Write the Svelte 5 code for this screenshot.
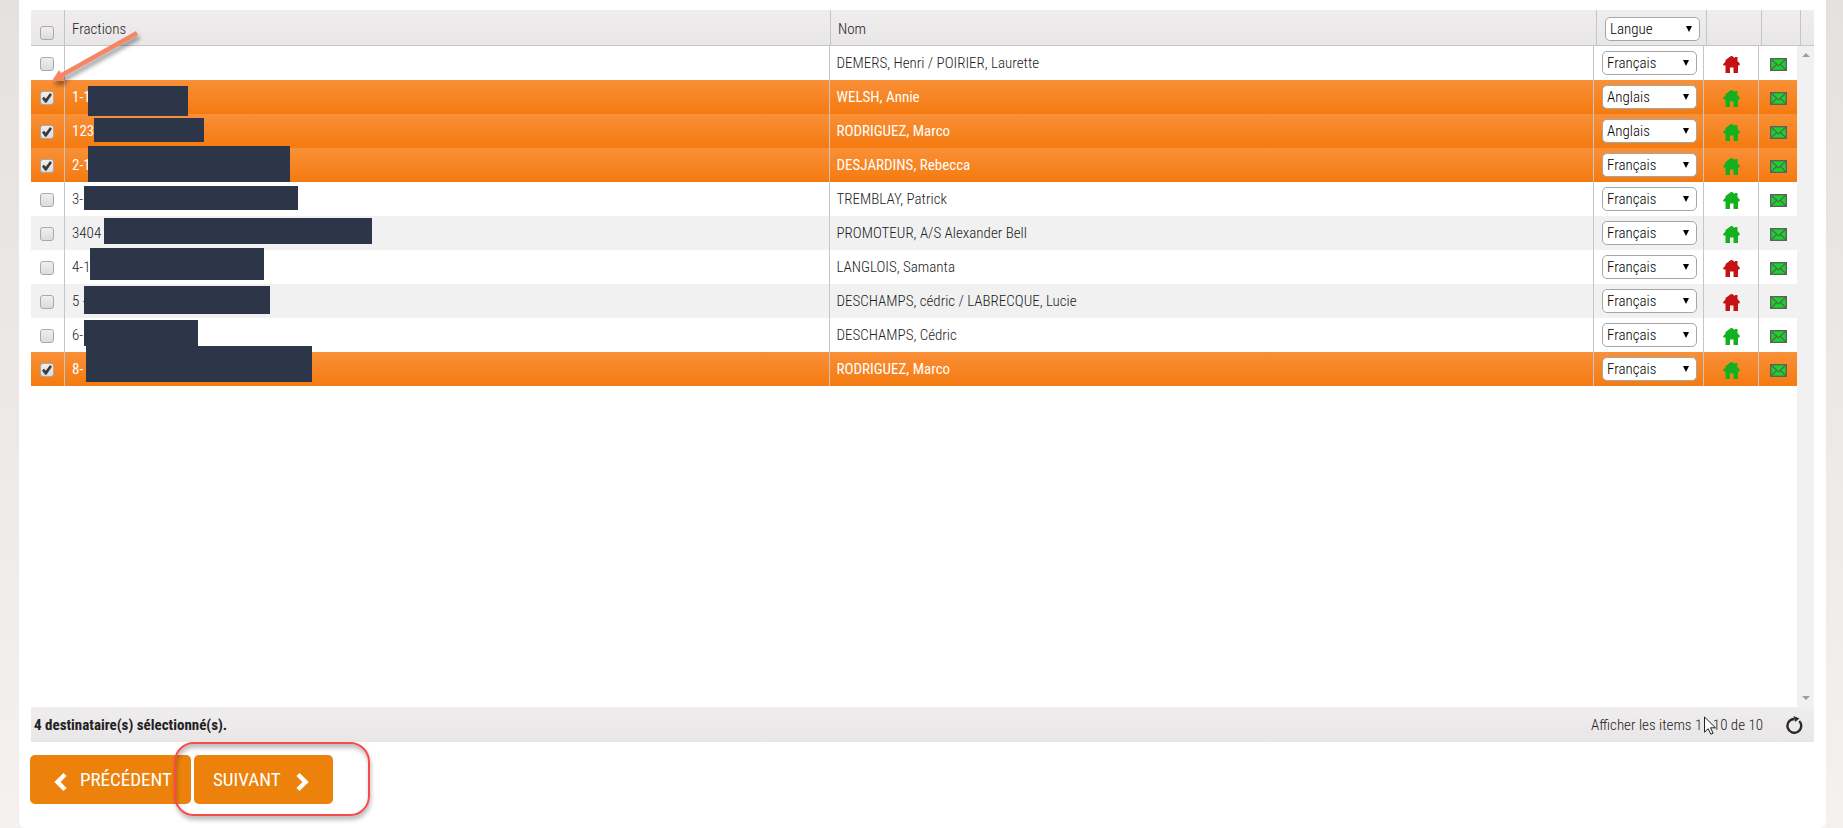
<script lang="ts">
  type Mask = { x: number; y: number; w: number; h: number };
  type Row = {
    fraction: string;
    name: string;
    lang: string;
    home: boolean;
    checked: boolean;
    mask?: Mask;
  };

  // Masks hide the private part of a fraction; x and y start at the cell's corner.
  let rows: Row[] = $state([
    { fraction: '', name: 'DEMERS, Henri / POIRIER, Laurette', lang: 'Français', home: false, checked: false },
    { fraction: '1-1', name: 'WELSH, Annie', lang: 'Anglais', home: true, checked: true, mask: { x: 23, y: 6, w: 100, h: 30 } },
    { fraction: '123', name: 'RODRIGUEZ, Marco', lang: 'Anglais', home: true, checked: true, mask: { x: 29, y: 4, w: 110, h: 24 } },
    { fraction: '2-1', name: 'DESJARDINS, Rebecca', lang: 'Français', home: true, checked: true, mask: { x: 23, y: -2, w: 202, h: 36 } },
    { fraction: '3-', name: 'TREMBLAY, Patrick', lang: 'Français', home: true, checked: false, mask: { x: 19, y: 4, w: 214, h: 24 } },
    { fraction: '3404', name: 'PROMOTEUR, A/S Alexander Bell', lang: 'Français', home: true, checked: false, mask: { x: 39, y: 2, w: 268, h: 26 } },
    { fraction: '4-1', name: 'LANGLOIS, Samanta', lang: 'Français', home: false, checked: false, mask: { x: 25, y: -2, w: 174, h: 32 } },
    { fraction: '5 -', name: 'DESCHAMPS, cédric / LABRECQUE, Lucie', lang: 'Français', home: false, checked: false, mask: { x: 19, y: 2, w: 186, h: 28 } },
    { fraction: '6-', name: 'DESCHAMPS, Cédric', lang: 'Français', home: true, checked: false, mask: { x: 19, y: 2, w: 114, h: 26 } },
    { fraction: '8-', name: 'RODRIGUEZ, Marco', lang: 'Français', home: true, checked: true, mask: { x: 21, y: -6, w: 226, h: 36 } },
  ]);

  let selected = $derived(rows.filter((r) => r.checked).length);

  function toggleAll(e: Event) {
    const on = (e.currentTarget as HTMLInputElement).checked;
    rows.forEach((r) => (r.checked = on));
  }

  function setAllLangs(e: Event) {
    const value = (e.currentTarget as HTMLSelectElement).value;
    if (value !== 'Langue') rows.forEach((r) => (r.lang = value));
  }
</script>

{#snippet caret()}
  <svg class="caret" viewBox="0 0 8 8" aria-hidden="true"><path d="M1 1h6L4 7z" /></svg>
{/snippet}

<div class="page">
  <main class="card">
    <section class="grid">
      <table class="grid-head">
        <colgroup>
          <col class="c-check" /><col /><col /><col class="c-lang" /><col class="c-home" /><col class="c-mail" /><col class="c-end" />
        </colgroup>
        <thead>
          <tr>
            <th class="check"><input type="checkbox" aria-label="Tout sélectionner" onchange={toggleAll} /></th>
            <th>Fractions</th>
            <th>Nom</th>
            <th class="lang">
              <span class="select">
                <select aria-label="Langue" onchange={setAllLangs}>
                  <option>Langue</option>
                  <option>Français</option>
                  <option>Anglais</option>
                </select>
                {@render caret()}
              </span>
            </th>
            <th></th>
            <th></th>
            <th></th>
          </tr>
        </thead>
      </table>

      <div class="grid-content">
        <div class="grid-rows">
          <table class="grid-body">
            <colgroup>
              <col class="c-check" /><col /><col /><col class="c-lang" /><col class="c-home" /><col class="c-mail" />
            </colgroup>
            <tbody>
              {#each rows as row, i}
                <tr class:alt={i % 2 === 1} class:selected={row.checked}>
                  <td class="check">
                    <input type="checkbox" aria-label="Sélectionner {row.name}" bind:checked={row.checked} />
                  </td>
                  <td class="fraction">
                    {row.fraction}
                    {#if row.mask}
                      <span
                        class="mask"
                        style="left: {row.mask.x}px; top: {row.mask.y}px; width: {row.mask.w}px; height: {row.mask.h}px"
                      ></span>
                    {/if}
                  </td>
                  <td>{row.name}</td>
                  <td class="lang">
                    <span class="select">
                      <select aria-label="Langue de {row.name}" bind:value={row.lang}>
                        <option>Français</option>
                        <option>Anglais</option>
                      </select>
                      {@render caret()}
                    </span>
                  </td>
                  <td class="icon">
                    <svg class="home" class:off={!row.home} viewBox="0 0 17 17" aria-hidden="true">
                      <path d="M8 0h1l3 2V1h2.500v4L17 8l-.8 1.500H15V17h-4.500v-5.500H7V17H2.500V9.500H.6L0 8.200 2.500 5.500V4z" />
                    </svg>
                  </td>
                  <td class="icon">
                    <svg class="mail" viewBox="0 0 17 13" aria-hidden="true">
                      <rect x=".7" y=".7" width="15.600" height="11.600" />
                      <path d="M1 1 8.500 8 16 1M1 12 6.500 6.500M16 12 10.500 6.500" />
                    </svg>
                  </td>
                </tr>
              {/each}
            </tbody>
          </table>
        </div>
        <div class="scrollbar" aria-hidden="true">
          <svg viewBox="0 0 8 4"><path d="M0 4h8L4 0z" /></svg>
          <svg viewBox="0 0 8 4"><path d="M0 0h8L4 4z" /></svg>
        </div>
      </div>

      <footer class="grid-foot">
        <strong>{selected} destinataire(s) sélectionné(s).</strong>
        <span class="pager">
          <span class="count">
            Afficher les items 1 - 10 de 10
            <svg class="pointer" viewBox="0 0 12 19" aria-hidden="true">
              <path d="M.5 1v15.200l3.700-3.500 2.600 5.500 2.300-1-2.600-5.400h5z" />
            </svg>
          </span>
          <button class="refresh" aria-label="Rafraîchir">
            <svg viewBox="0 0 17 18" aria-hidden="true">
              <path class="ring" d="M13.200 5A6.900 6.900 0 1 1 8 3" />
              <path class="tip" d="M7.500 0 13.500 2.500 9 6z" />
            </svg>
          </button>
        </span>
      </footer>
    </section>

    <nav class="actions">
      <button class="step">
        <svg class="chevron" viewBox="0 0 13 20" aria-hidden="true"><path d="M11 2.500 3.500 10 11 17.500" /></svg>
        PRÉCÉDENT
      </button>
      <span class="next">
        <button class="step">
          SUIVANT
          <svg class="chevron" viewBox="0 0 13 20" aria-hidden="true"><path d="M2 2.500 9.500 10 2 17.500" /></svg>
        </button>
        <span class="ring-note"></span>
      </span>
    </nav>

    <svg class="arrow-note" viewBox="0 0 110 60" aria-hidden="true">
      <path d="M105 5 107 9 32 51 34 55 21 55 28 44 30 47z" />
    </svg>
  </main>
</div>

<style>
  :global(body) {
    margin: 0;
  }

  .page {
    box-sizing: border-box;
    min-height: 100vh;
    display: flex;
    padding: 0 17px 0 19px;
    background: linear-gradient(#e5e1e0, #f4f1f0);
    font-family: 'Roboto Condensed', 'Liberation Sans Narrow', 'Liberation Sans', sans-serif;
    font-size: 15px;
    color: #222;
  }

  .card {
    position: relative;
    flex: 1;
    display: flex;
    flex-direction: column;
    padding: 10px 12px 24px;
    background: #fff;
    border-radius: 0 0 6px 6px;
  }

  .grid {
    flex: 1;
    display: flex;
    flex-direction: column;
    font-weight: 300;
  }

  table {
    width: 100%;
    table-layout: fixed;
    border-collapse: separate;
    border-spacing: 0;
  }

  .c-check {
    width: 34px;
  }

  .c-lang {
    width: 110px;
  }

  .c-home {
    width: 55px;
  }

  .c-mail {
    width: 39px;
  }

  .grid-body .c-mail {
    width: 38px;
  }

  .c-end {
    width: 13px;
  }

  th,
  td {
    box-sizing: border-box;
    padding: 0 7px;
    border-right: 1px solid #c5c5c5;
    text-align: left;
    font-weight: 300;
    white-space: nowrap;
  }

  th:last-child,
  td:last-child {
    border-right: 0;
  }

  .grid-head {
    background: linear-gradient(#efeded, #e8e6e7);
  }

  th {
    height: 36px;
    padding-top: 3px;
    border-bottom: 1px solid #c5c5c5;
  }

  td {
    height: 34px;
  }

  .alt {
    background: #f1f1f1;
  }

  .selected {
    background: linear-gradient(#f99038, #f57a10);
    color: #fff;
  }

  .selected td {
    font-weight: 400;
  }

  .check {
    padding: 0 0 0 9px;
  }

  th.check {
    padding-top: 8px;
  }

  .check input {
    appearance: none;
    display: block;
    box-sizing: border-box;
    width: 14px;
    height: 14px;
    margin: 2px 0 0;
    border: 1px solid #a9a9a9;
    border-radius: 3px;
    background: linear-gradient(#efefef, #dcdcdc);
  }

  .check input:checked {
    position: relative;
  }

  .check input:checked::after {
    content: '';
    position: absolute;
    inset: 1px;
    background: #3b3b3b;
    clip-path: polygon(0 55%, 20% 38%, 38% 58%, 80% 0, 100% 18%, 44% 98%, 32% 98%);
  }

  .fraction {
    position: relative;
  }

  .mask {
    position: absolute;
    z-index: 1;
    background: #2d3649;
  }

  td.lang {
    padding: 0 8px;
  }

  th.lang {
    padding: 2px 8px 0;
  }

  .select {
    position: relative;
    display: block;
    width: 95px;
  }

  .select select {
    appearance: none;
    display: block;
    box-sizing: border-box;
    width: 100%;
    height: 24px;
    padding: 0 4px;
    border: 1px solid #a6a6a6;
    border-radius: 5px;
    background: #fff;
    font: inherit;
    font-weight: 300;
    color: #000;
  }

  .caret {
    position: absolute;
    top: 8px;
    right: 7px;
    width: 8px;
    height: 8px;
    pointer-events: none;
  }

  td.icon {
    padding: 0;
  }

  .home,
  .mail {
    display: block;
    margin: 2px auto 0;
  }

  .home {
    width: 17px;
    height: 17px;
    fill: #14b11f;
  }

  .home.off {
    fill: #c61212;
  }

  .mail {
    width: 17px;
    height: 13px;
    fill: #18d52a;
    stroke: #5a635a;
    stroke-width: 1.4;
  }

  .mail path {
    fill: none;
    stroke-width: 1.2;
  }

  .grid-content {
    flex: 1;
    display: flex;
  }

  .grid-rows {
    flex: 1;
  }

  .scrollbar {
    display: flex;
    flex-direction: column;
    justify-content: space-between;
    align-items: center;
    width: 17px;
    padding: 7px 0;
    box-sizing: border-box;
    background: #f1f1f1;
  }

  .scrollbar svg {
    width: 8px;
    height: 4px;
    fill: #a0a0a0;
  }

  .grid-foot {
    display: flex;
    justify-content: space-between;
    align-items: center;
    height: 35px;
    padding: 0 11px 0 3px;
    background: linear-gradient(#efeded, #e8e6e7);
  }

  .grid-foot strong {
    font-weight: 700;
  }

  .pager {
    display: flex;
    align-items: center;
    gap: 23px;
  }

  .count {
    position: relative;
  }

  .pointer {
    position: absolute;
    top: 0;
    right: 47px;
    width: 12px;
    height: 19px;
    fill: #fff;
    stroke: #222;
  }

  .refresh {
    padding: 0;
    border: 0;
    background: none;
  }

  .refresh svg {
    display: block;
    width: 17px;
    height: 18px;
  }

  .ring {
    fill: none;
    stroke: #2b2b2b;
    stroke-width: 2.4;
  }

  .tip {
    fill: #2b2b2b;
  }

  .actions {
    display: flex;
    gap: 3px;
    margin: 13px 0 0 -1px;
  }

  .step {
    display: flex;
    align-items: center;
    gap: 13px;
    height: 49px;
    padding: 0 19px 0 24px;
    border: 0;
    border-radius: 5px;
    background: #ec820c;
    font: inherit;
    font-size: 19px;
    color: #fff;
  }

  .next {
    position: relative;
  }

  .next .step {
    gap: 15px;
    padding: 0 24px 0 19px;
  }

  .chevron {
    width: 13px;
    height: 20px;
    margin-top: 4px;
    fill: none;
    stroke: #fff;
    stroke-width: 4.500;
  }

  .ring-note {
    position: absolute;
    top: -13px;
    left: -20px;
    right: -37px;
    bottom: -12px;
    border: 2px solid #f94a4a;
    border-radius: 20px;
    box-shadow:
      1px 4px 4px rgb(0 0 0 / 0.25),
      inset 1px 4px 4px rgb(0 0 0 / 0.25);
    pointer-events: none;
  }

  .arrow-note {
    position: absolute;
    z-index: 2;
    top: 26px;
    left: 12px;
    width: 110px;
    height: 60px;
    fill: #f68560;
    filter: drop-shadow(2px 4px 2px rgb(0 0 0 / 0.4));
    pointer-events: none;
  }
</style>
